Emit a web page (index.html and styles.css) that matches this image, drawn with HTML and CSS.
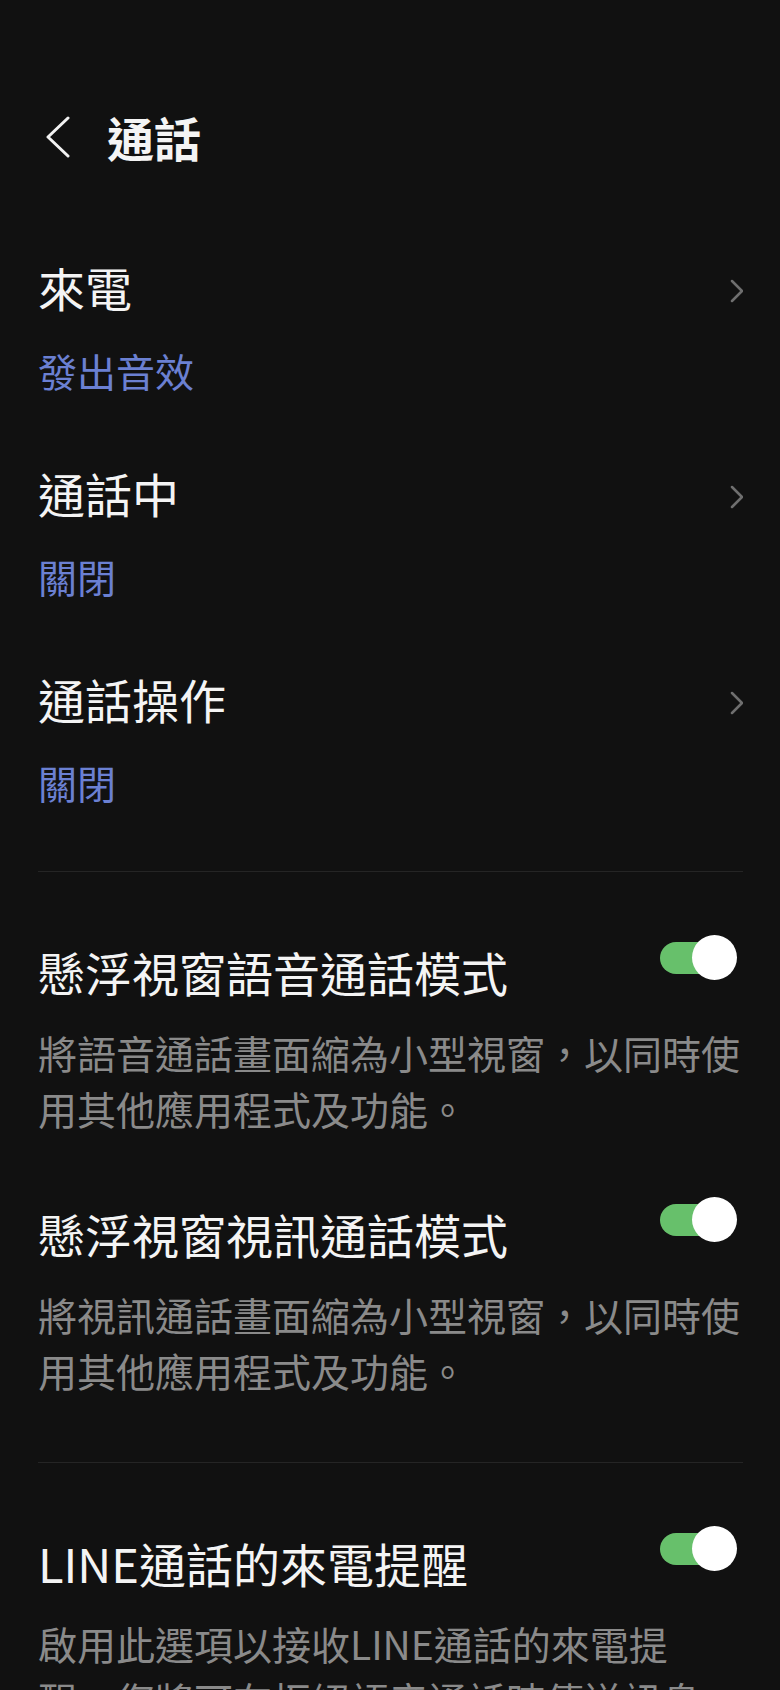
FILE: index.html
```html
<!DOCTYPE html>
<html lang="zh-Hant">
<head>
  <meta charset="UTF-8">
  <title>通話</title>
  <link rel="stylesheet" href="styles.css">
</head>
<body>
  <div class="page">

    <!-- 標題列 -->
    <div class="header">
      <svg class="back" width="24" height="42" viewBox="0 0 24 42">
        <polyline points="22,2 2,21 22,40" fill="none" stroke="#f2f2f2" stroke-width="3" stroke-linecap="round" stroke-linejoin="round"/>
      </svg>
      <h1>通話</h1>
    </div>

    <!-- 子選單 -->
    <div class="group nav-group">
      <div class="nav-item">
        <div class="nav-text">
          <div class="item-title">來電</div>
          <div class="item-value">發出音效</div>
        </div>
        <svg class="chevron" width="14" height="24" viewBox="0 0 14 24">
          <polyline points="3,2 13,12 3,22" fill="none" stroke="#6f6f6f" stroke-width="2.5" stroke-linecap="round" stroke-linejoin="round"/>
        </svg>
      </div>
      <div class="nav-item">
        <div class="nav-text">
          <div class="item-title">通話中</div>
          <div class="item-value">關閉</div>
        </div>
        <svg class="chevron" width="14" height="24" viewBox="0 0 14 24">
          <polyline points="3,2 13,12 3,22" fill="none" stroke="#6f6f6f" stroke-width="2.5" stroke-linecap="round" stroke-linejoin="round"/>
        </svg>
      </div>
      <div class="nav-item">
        <div class="nav-text">
          <div class="item-title">通話操作</div>
          <div class="item-value">關閉</div>
        </div>
        <svg class="chevron" width="14" height="24" viewBox="0 0 14 24">
          <polyline points="3,2 13,12 3,22" fill="none" stroke="#6f6f6f" stroke-width="2.5" stroke-linecap="round" stroke-linejoin="round"/>
        </svg>
      </div>
    </div>

    <!-- 懸浮視窗 -->
    <div class="group switch-group">
      <div class="switch-item">
        <div class="switch-row">
          <div class="item-title">懸浮視窗語音通話模式</div>
          <div class="toggle on"><span class="track"></span><span class="knob"></span></div>
        </div>
        <div class="item-desc">將語音通話畫面縮為小型視窗，以同時使用其他應用程式及功能。</div>
      </div>
      <div class="switch-item">
        <div class="switch-row">
          <div class="item-title">懸浮視窗視訊通話模式</div>
          <div class="toggle on"><span class="track"></span><span class="knob"></span></div>
        </div>
        <div class="item-desc">將視訊通話畫面縮為小型視窗，以同時使用其他應用程式及功能。</div>
      </div>
    </div>

    <!-- 來電提醒 -->
    <div class="group switch-group">
      <div class="switch-item">
        <div class="switch-row">
          <div class="item-title">LINE通話的來電提醒</div>
          <div class="toggle on"><span class="track"></span><span class="knob"></span></div>
        </div>
        <div class="item-desc">啟用此選項以接收LINE通話的來電提<br>醒，您將可在拒絕語音通話時傳送訊息。</div>
      </div>
    </div>

  </div>
</body>
</html>
```

FILE: styles.css
```css
body {
  margin: 0;
  background-color: #111111;
  color: #f4f4f4;
  font-family: "Noto Sans CJK TC", "Noto Sans", sans-serif;
  text-spacing-trim: space-all;
}
.page {
  height: 1690px;
  overflow: hidden;
}
.header {
  display: flex;
  align-items: center;
  gap: 37px;
  padding: 107px 37px 60px 46px;
}
.header h1 {
  margin: 0;
  font-size: 47px;
  line-height: 60px;
  font-weight: 700;
}
.group {
  margin: 0 37px 0 38px;
}
.group + .group {
  border-top: 1px solid #252525;
}
.nav-group {
  padding-bottom: 26px;
}
.nav-item {
  display: flex;
  justify-content: space-between;
  align-items: flex-start;
  padding: 30px 0 38px;
}
.chevron {
  margin-top: 22px;
}
.item-title {
  font-size: 47px;
  line-height: 60px;
}
.item-value {
  margin-top: 28px;
  font-size: 39px;
  line-height: 50px;
  color: #6b80d2;
}
.switch-group {
  padding: 37px 0 29px;
}
.switch-item {
  padding: 33px 0 35px;
}
.switch-row {
  display: flex;
  justify-content: space-between;
  align-items: flex-start;
}
.item-desc {
  margin-top: 22px;
  font-size: 39px;
  line-height: 56px;
  color: #8a8a8a;
}
.toggle {
  position: relative;
  width: 77px;
  height: 45px;
  margin: -7px 6px 0 0;
}
.toggle .track {
  display: block;
  width: 66px;
  height: 32px;
  margin-top: 7px;
  border-radius: 16px;
  background-color: #67c06b;
}
.toggle .knob {
  position: absolute;
  top: 0;
  right: 0;
  width: 45px;
  height: 45px;
  border-radius: 50%;
  background-color: #ffffff;
}
```
